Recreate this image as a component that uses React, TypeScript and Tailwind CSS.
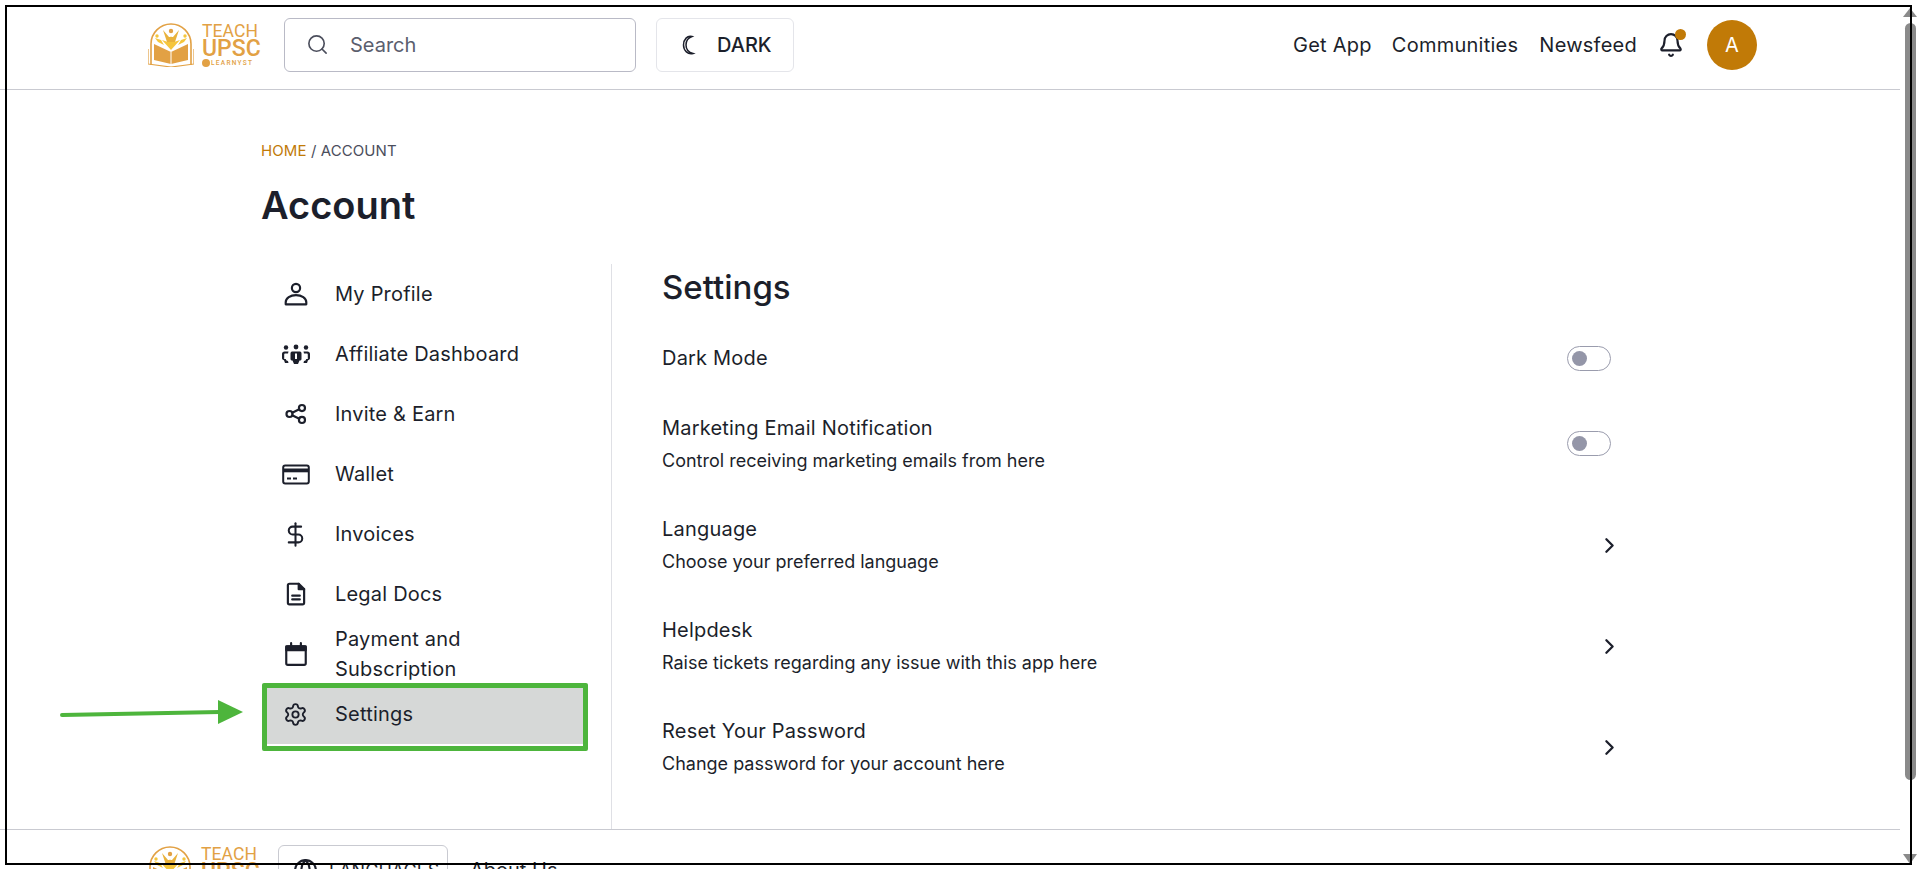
import { Search, Bell, ChevronRight, DollarSign, Settings, Globe } from "lucide-react";
import type { ReactNode } from "react";

const Logo = () => (
  <div className="flex items-start gap-2 shrink-0 text-[#e2a144]">
    <svg width="46" height="44" viewBox="0 0 46 44" className="shrink-0">
      <path d="M3 42V21a20 20 0 0 1 40 0v21" fill="none" stroke="#e2a144" strokeWidth="1.6" />
      <path d="M23 27l-9-10 6 2 3-6 3 6 6-2z" fill="#f5c63c" />
      <path d="M15 7l6 7h4l6-7-4 12h-8z" fill="#e9b23c" />
      <circle cx="23" cy="8" r="2.200" fill="#e2a144" />
      <path d="M7 15l6 2 3 5-6-3z" fill="#f5c63c" />
      <path d="M39 15l-6 2-3 5 6-3z" fill="#f5c63c" />
      <circle cx="9" cy="13" r="1.700" fill="#f5c63c" />
      <circle cx="37" cy="13" r="1.700" fill="#f5c63c" />
      <path d="M6 21l17 8 17-8v16l-17 4-17-4z" fill="#e2a144" />
      <path d="M0 26v15l23 3 23-3V26" fill="none" stroke="#e2a144" strokeWidth="1.200" />
      <path d="M23 29v12" stroke="#fff" strokeWidth="1" />
    </svg>
    <div className="flex flex-col font-['Roboto',sans-serif] leading-none">
      <span className="text-[17.5px] leading-[16px] tracking-[0.1px]">TEACH</span>
      <span className="text-[23px] leading-[20px] font-medium">UPSC</span>
      <span className="flex items-center gap-[1px] text-[6.5px] leading-[9px] tracking-[1.3px] font-medium">
        <span className="w-[8px] h-[8px] rounded-full bg-[#e2a144]" />
        LEARNYST
      </span>
    </div>
  </div>
);

const Icon = ({ children }: { children: ReactNode }) => (
  <svg width="26" height="26" viewBox="0 0 24 24" fill="none" stroke="#1c1f2b" strokeWidth="2" strokeLinecap="round" strokeLinejoin="round">
    {children}
  </svg>
);

const menu: { label: ReactNode; icon: ReactNode }[] = [
  {
    label: "My Profile",
    icon: (
      <Icon>
        <circle cx="12" cy="6.500" r="3.800" />
        <path d="M2.500 21.500v-2a9.500 6.500 0 0 1 19 0v2z" />
      </Icon>
    ),
  },
  {
    label: "Affiliate Dashboard",
    icon: (
      <svg width="30" height="24" viewBox="0 0 30 24" fill="#1c1f2b">
        <circle cx="5" cy="5.500" r="2.200" />
        <circle cx="15" cy="5" r="2.400" />
        <circle cx="25" cy="5.500" r="2.200" />
        <path d="M11 9.500h8c1 0 1.500 1 1.500 2v5.500c0 1-1 1.500-2 1.500L17 22h-4l-1.500-3.500c-1 0-2-.5-2-1.500v-5.500c0-1 .5-2 1.500-2zM14 11.500v5.500h2v-5.500z" />
        <path d="M7.500 9.500H3.500C2 9.500 1 10.500 1 12v4c0 1.500 1 2 2 2.200l1 2.800h3.500l-.5-2-1.500-.5-.8-1.500H3.200v-4.500c0-.5.500-1 1-1H7z" />
        <path d="M22.500 9.500h4c1.500 0 2.500 1 2.500 2.500v4c0 1.500-1 2-2 2.200L26 21h-3.500l.5-2 1.500-.5.800-1.500h1.500v-4.500c0-.5-.5-1-1-1H23z" />
      </svg>
    ),
  },
  {
    label: "Invite & Earn",
    icon: (
      <Icon>
        <circle cx="17.500" cy="6.500" r="2.800" />
        <circle cx="6" cy="12" r="2.800" />
        <circle cx="17.500" cy="17.500" r="2.800" />
        <path d="M8.500 10.800l6.500-3.100M8.500 13.200l6.500 3.100" />
      </Icon>
    ),
  },
  {
    label: "Wallet",
    icon: (
      <svg width="28" height="24" viewBox="0 0 28 24" fill="none">
        <rect x="1.200" y="3.500" width="25.600" height="18" rx="2" stroke="#1c1f2b" strokeWidth="2" />
        <rect x="1.200" y="6.500" width="25.600" height="3.800" fill="#1c1f2b" />
        <path d="M5 16.500h4M11 16.500h4" stroke="#1c1f2b" strokeWidth="1.800" />
      </svg>
    ),
  },
  { label: "Invoices", icon: <DollarSign size={27} color="#1c1f2b" strokeWidth={1.8} /> },
  {
    label: "Legal Docs",
    icon: (
      <Icon>
        <path d="M6 2.500h8.500l5 5V20a1.500 1.500 0 0 1-1.500 1.500H6A1.500 1.500 0 0 1 4.500 20V4A1.500 1.500 0 0 1 6 2.500z" />
        <path d="M14.500 2.500v5h5" fill="#1c1f2b" />
        <path d="M8.500 13.500h7M8.500 17h7" />
      </Icon>
    ),
  },
  {
    label: (
      <>
        Payment and
        <br />
        Subscription
      </>
    ),
    icon: (
      <Icon>
        <rect x="3" y="5" width="18" height="17" rx="1.500" />
        <rect x="3" y="5" width="18" height="3.500" fill="#1c1f2b" />
        <path d="M7.500 2v3M16.500 2v3" />
      </Icon>
    ),
  },
];

const Toggle = () => (
  <div className="w-[44px] h-[25px] rounded-full border border-[#9a9cad] flex items-center pl-[4px] bg-white">
    <div className="w-[15px] h-[15px] rounded-full bg-[#9496a8]" />
  </div>
);

const rows = [
  { title: "Language", sub: "Choose your preferred language" },
  { title: "Helpdesk", sub: "Raise tickets regarding any issue with this app here" },
  { title: "Reset Your Password", sub: "Change password for your account here" },
];

const App = () => {
  return (
    <div className="relative w-full h-[869px] overflow-hidden bg-white text-[#1c1f2b] font-['Inter',sans-serif]">
      <div className="w-[1900px]">
        <header className="h-[90px] border-b border-[#c9cad1] flex items-center pl-[148px] pr-[143px]">
          <div className="w-[136px] pt-[1px]">
            <Logo />
          </div>
          <div className="w-[352px] h-[54px] border border-[#b9bac6] rounded-md flex items-center pl-[21px] gap-[21px] text-[20px] text-[#5b5e6e]">
            <Search size={23} strokeWidth={1.7} color="#4b4e5c" />
            <span>Search</span>
          </div>
          <div className="ml-[20px] w-[138px] h-[54px] border border-[#e4e5ea] rounded-md flex items-center pl-[24px] gap-[16px] text-[20px] font-medium">
            <svg width="20" height="22" viewBox="0 0 20 22" fill="none" stroke="#1c1f2b" strokeWidth="1.500">
              <path d="M11 2.500C6.500 4 5 8 5 11s1.500 7 7 8.500c-5 1.500-9.500-3-9.500-8.500S6.500 1 11 2.500z" />
            </svg>
            <span>DARK</span>
          </div>
          <nav className="ml-auto flex items-center text-[20px] tracking-[0.25px]">
            <span>Get App</span>
            <span className="ml-[20px]">Communities</span>
            <span className="ml-[21px]">Newsfeed</span>
            <div className="relative ml-[20px] w-[28px] h-[28px] flex items-center justify-center">
              <Bell size={26} strokeWidth={2} color="#1c1f2b" />
              <span className="absolute right-[-1px] top-[-2px] w-[11px] h-[11px] rounded-full bg-[#c17a07]" />
            </div>
            <div className="ml-[22px] w-[50px] h-[50px] rounded-full bg-[#c17a07] text-white flex items-center justify-center">A</div>
          </nav>
        </header>

        <main className="pl-[261px] pt-[51px]">
          <div className="text-[15px] leading-[20px] tracking-[0.1px] text-[#4b4e5c]">
            <span className="text-[#c17a07]">HOME</span> / ACCOUNT
          </div>
          <h1 className="mt-[22px] text-[38px] leading-[44px] font-semibold">Account</h1>
          <div className="mt-[37px] flex h-[565px]">
            <aside className="w-[351px] border-r border-[#dfe0e5]">
              {menu.map((item, i) => (
                <div key={i} className="h-[60px] ml-[1px] flex items-center text-[20px] leading-[30px] tracking-[0.2px]">
                  <div className="w-[73px] flex justify-center shrink-0 translate-x-[-3px]">{item.icon}</div>
                  <span>{item.label}</span>
                </div>
              ))}
              <div className="relative h-[60px] ml-[1px] mr-[23px] flex items-center bg-[#d6d8d7] text-[20px] tracking-[0.2px]">
                <div className="w-[73px] flex justify-center shrink-0 translate-x-[-3px]">
                  <Settings size={25} strokeWidth={1.8} color="#1c1f2b" />
                </div>
                <span>Settings</span>
                <span className="absolute left-0 right-0 top-[-1px] bottom-[-7px] border-[5px] border-[#4db53c] rounded-[2px]" />
                <svg className="absolute left-[-202px] top-[14px]" width="184" height="28" viewBox="0 0 184 28">
                  <path d="M2 17L160 14" stroke="#4db53c" strokeWidth="4" strokeLinecap="round" />
                  <path d="M158 2l25 12-25 12z" fill="#4db53c" />
                </svg>
              </div>
            </aside>
            <section className="w-[999px] pl-[50px] pt-[1px]">
              <h2 className="text-[33px] leading-[44px] font-medium">Settings</h2>
              <div className="mt-[35px] flex items-center justify-between h-[28px] text-[20px] tracking-[0.2px]">
                <span>Dark Mode</span>
                <Toggle />
              </div>
              <div className="mt-[45px] flex items-center justify-between h-[53px]">
                <div>
                  <div className="text-[20px] leading-[28px] tracking-[0.2px]">Marketing Email Notification</div>
                  <div className="text-[18px] leading-[26px] mt-[6px]">Control receiving marketing emails from here</div>
                </div>
                <Toggle />
              </div>
              {rows.map((r, i) => (
                <div key={r.title} className={`${i === 0 ? "mt-[43px]" : "mt-[37px]"} flex items-center justify-between h-[64px]`}>
                  <div>
                    <div className="text-[20px] leading-[28px] tracking-[0.2px]">{r.title}</div>
                    <div className="text-[18px] leading-[26px] mt-[6px]">{r.sub}</div>
                  </div>
                  <ChevronRight size={25} strokeWidth={2.2} color="#1c1f2b" className="mr-[-11px]" />
                </div>
              ))}
            </section>
          </div>
        </main>

        <footer className="border-t border-[#c9cad1] h-[60px] pl-[147px] pt-[16px] flex items-start">
          <div className="w-[131px]">
            <Logo />
          </div>
          <div className="w-[170px] h-[50px] mt-[-1px] border border-[#c9cad1] rounded-md flex items-center pl-[14px] gap-[11px] text-[18px]">
            <Globe size={25} color="#1c1f2b" strokeWidth={2} />
            <span>LANGUAGES</span>
          </div>
          <span className="ml-[22px] text-[20px] leading-[50px] mt-[-1px]">About Us</span>
        </footer>
      </div>

      {/* scrollbar of the captured window */}
      <div className="absolute left-[1905px] top-[23px] w-[11px] h-[757px] rounded-full bg-[#8a8a8a]" />
      <div className="absolute left-[1903px] top-[8px] w-0 h-0 border-x-[7px] border-x-transparent border-b-[9px] border-b-[#8a8a8a]" />
      <div className="absolute left-[1903px] top-[854px] w-0 h-0 border-x-[7px] border-x-transparent border-t-[10px] border-t-[#8a8a8a]" />
      {/* black frame drawn round the screenshot */}
      <div className="absolute left-[5px] top-[5px] w-[1907px] h-[860px] border-[2.5px] border-black pointer-events-none" />
    </div>
  );
};

export default App;
